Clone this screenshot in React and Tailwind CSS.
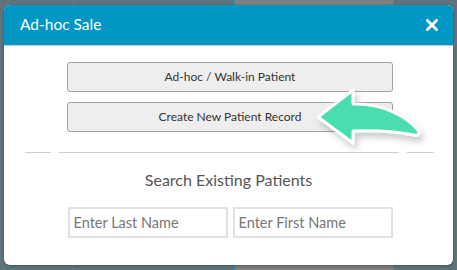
import React from "react";

const Arrow = () => (
  <svg
    className="absolute left-[306px] top-[83px] pointer-events-none"
    width="130"
    height="82"
    viewBox="-4 -2 130 82"
  >
    <defs>
      <filter id="sh" x="-30%" y="-30%" width="160%" height="180%">
        <feDropShadow dx="3" dy="5" stdDeviation="3" floodColor="#000" floodOpacity="0.2" />
      </filter>
    </defs>
    <path
      d="M8 32 L43 5 L43 19 C72 18 96 31 108 45 Q111 51 104 50 C84 46 64 45 43 46 L43 58 Z"
      fill="#48ddb0"
      stroke="#ffffff"
      strokeWidth="3"
      strokeLinejoin="round"
      filter="url(#sh)"
    />
  </svg>
);

export default function App() {
  return (
    <div
      className="relative w-[457px] h-[270px] overflow-hidden bg-[#5e737c]"
      style={{ fontFamily: "Lato, 'Open Sans', sans-serif" }}
    >
      <div className="flex h-full">
        <div className="w-[74px] border-r border-[#3e8ea8]" />
        <div className="w-[161px] border-r border-[#3e8ea8]" />
        <div className="w-[159px] bg-[#7f7f7f] border-r border-[#3e8ea8]" />
        <div className="flex-1" />
      </div>

      <div className="absolute left-[4px] top-[5px] w-[449px] h-[260px] bg-white rounded-[6px] overflow-hidden shadow-[0_1px_3px_rgba(0,0,0,0.3)]">
        <div className="h-[41px] bg-[#0097c4] flex items-center justify-between pl-4 pr-[15px] border-b border-[#c9c9c9]">
          <span className="text-white text-[15.5px]">Ad-hoc Sale</span>
          <svg width="12" height="12" viewBox="0 0 12 12">
            <path d="M1.5 1.5 L10.5 10.5 M10.5 1.5 L1.5 10.5" stroke="#fff" strokeWidth="2.8" strokeLinecap="square" />
          </svg>
        </div>

        <div className="pt-4 flex flex-col items-center">
          <div className="w-[326px] flex flex-col gap-[10px] ml-[3px]">
            <button className="h-[30px] w-full rounded-[3px] border border-[#a3a3a3] bg-[#eeeeee] text-[12px] text-[#333]">
              Ad-hoc / Walk-in Patient
            </button>
            <button className="h-[30px] w-full rounded-[3px] border border-[#a3a3a3] bg-[#eeeeee] text-[12px] text-[#333]">
              Create New Patient Record
            </button>
          </div>

          <div className="w-full flex gap-2 pl-[21px] pr-[19px] mt-[20px]">
            <div className="w-[26px] h-px bg-[#cfcfcf]" />
            <div className="flex-1 h-px bg-[#cfcfcf]" />
            <div className="w-[27px] h-px bg-[#cfcfcf]" />
          </div>

          <div className="mt-[17px] text-[16px] text-[#555] leading-5">Search Existing Patients</div>

          <div className="mt-[17px] flex gap-[5px] ml-[3px]">
            <input
              placeholder="Enter Last Name"
              className="w-[160px] h-[31px] border-2 border-[#e2e2e2] px-[4px] text-[14.5px] text-[#333] placeholder:text-[#777] outline-none"
            />
            <input
              placeholder="Enter First Name"
              className="w-[160px] h-[31px] border-2 border-[#e2e2e2] px-[4px] text-[14.5px] text-[#333] placeholder:text-[#777] outline-none"
            />
          </div>
        </div>
      </div>

      <Arrow />
    </div>
  );
}
